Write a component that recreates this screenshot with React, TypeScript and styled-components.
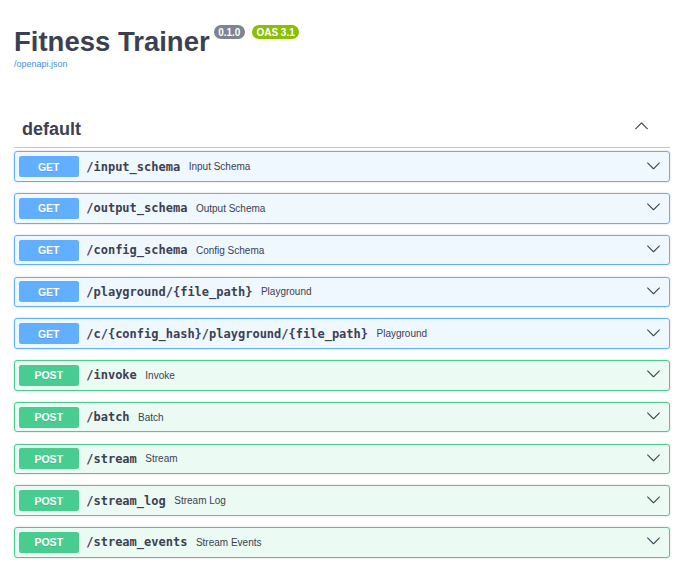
import React from "react";
import styled, { createGlobalStyle } from "styled-components";

const GlobalStyle = createGlobalStyle`
  html, body { margin: 0; padding: 0; background: #ffffff; }
  body { font-family: "Liberation Sans", Arial, sans-serif; color: #3b4151; }
  * { box-sizing: border-box; }
`;

const Wrapper = styled.div`
  padding: 0 10px 0 14px;
`;

const Info = styled.div`
  padding-top: 26px;
`;

const Title = styled.h2`
  margin: 0;
  display: flex;
  align-items: flex-start;
  font-family: "Liberation Sans", Arial, sans-serif;
  font-size: 27.5px;
  font-weight: 700;
  color: #3b4151;
  line-height: 31px;
`;

const Badge = styled.small<{ $green?: boolean }>`
  display: inline-block;
  margin: -1px 0 0 ${(p) => (p.$green ? "7px" : "4px")};
  padding: 1.5px 4.5px;
  border-radius: 57px;
  background: ${(p) => (p.$green ? "#89bf04" : "#7d8492")};
  color: #ffffff;
  font-family: "Liberation Sans", Arial, sans-serif;
  font-size: 10px;
  font-weight: 700;
  line-height: 11px;
`;

const Link = styled.a`
  display: block;
  margin-top: 2px;
  font-family: "Liberation Sans", Arial, sans-serif;
  font-size: 9px;
  line-height: 10px;
  color: #4990e2;
  text-decoration: none;
`;

const Section = styled.div`
  margin-top: 42px;
`;

const TagHeader = styled.div`
  display: flex;
  align-items: flex-start;
  padding: 7.5px 15px 7.5px 8px;
  border-bottom: 1px solid rgba(59, 65, 81, 0.3);
  margin-bottom: 3.75px;
`;

const TagName = styled.h3`
  margin: 0;
  flex: 1 1 auto;
  font-family: "Liberation Sans", Arial, sans-serif;
  font-size: 18px;
  font-weight: 700;
  line-height: 20.7px;
  color: #3b4151;
`;

const TagArrow = styled.span`
  display: flex;
  margin: -1px 6px 0 0;
  color: #3b4151;
`;

const OpBlock = styled.div<{ $method: "GET" | "POST" }>`
  display: flex;
  align-items: center;
  padding: 3.75px;
  margin: 0 0 11.25px;
  border-radius: 3px;
  border: 1px solid ${(p) => (p.$method === "GET" ? "#61affe" : "#49cc90")};
  background: ${(p) =>
    p.$method === "GET" ? "rgba(97, 175, 254, 0.1)" : "rgba(73, 204, 144, 0.1)"};
  box-shadow: 0 0 2.25px rgba(0, 0, 0, 0.19);
`;

const Method = styled.span<{ $method: "GET" | "POST" }>`
  min-width: 60px;
  padding: 4.5px 0;
  border-radius: 2.25px;
  background: ${(p) => (p.$method === "GET" ? "#61affe" : "#49cc90")};
  color: #ffffff;
  font-family: "Liberation Sans", Arial, sans-serif;
  font-size: 10.5px;
  font-weight: 700;
  line-height: 12px;
  text-align: center;
  text-shadow: 0 1px 0 rgba(0, 0, 0, 0.1);
`;

const Path = styled.span`
  padding: 0 8.5px 0 7.5px;
  font-family: "DejaVu Sans Mono", "Liberation Mono", monospace;
  font-size: 12px;
  font-weight: 700;
  color: #3b4151;
`;

const Desc = styled.span`
  flex: 1 1 auto;
  font-family: "Liberation Sans", Arial, sans-serif;
  font-size: 10px;
  color: #3b4151;
`;

const RowArrow = styled.span`
  display: flex;
  margin: 0 4.5px 3px 0;
  color: #3b4151;
`;

const ArrowDown = () => (
  <svg width="15" height="15" viewBox="0 0 20 20" fill="currentColor">
    <path d="M17.418 6.109c.272-.268.709-.268.979 0s.271.701 0 .969l-7.908 7.83c-.27.268-.707.268-.979 0l-7.908-7.83c-.27-.268-.27-.701 0-.969.271-.268.709-.268.979 0L10 13.25l7.418-7.141z" />
  </svg>
);

const ArrowUp = () => (
  <svg width="15" height="15" viewBox="0 0 20 20" fill="currentColor">
    <path d="M17.418 14.908c.272.268.709.268.979 0s.271-.701 0-.969l-7.908-7.83c-.27-.268-.707-.268-.979 0l-7.908 7.830c-.27.268-.27.701 0 .969.271.268.709.268.979 0L10 7.77l7.418 7.138z" />
  </svg>
);

type Op = { method: "GET" | "POST"; path: string; desc: string };

const ops: Op[] = [
  { method: "GET", path: "/input_schema", desc: "Input Schema" },
  { method: "GET", path: "/output_schema", desc: "Output Schema" },
  { method: "GET", path: "/config_schema", desc: "Config Schema" },
  { method: "GET", path: "/playground/{file_path}", desc: "Playground" },
  { method: "GET", path: "/c/{config_hash}/playground/{file_path}", desc: "Playground" },
  { method: "POST", path: "/invoke", desc: "Invoke" },
  { method: "POST", path: "/batch", desc: "Batch" },
  { method: "POST", path: "/stream", desc: "Stream" },
  { method: "POST", path: "/stream_log", desc: "Stream Log" },
  { method: "POST", path: "/stream_events", desc: "Stream Events" },
];

export default function App() {
  return (
    <>
      <GlobalStyle />
      <Wrapper>
        <Info>
          <Title>
            Fitness Trainer
            <Badge>0.1.0</Badge>
            <Badge $green>OAS 3.1</Badge>
          </Title>
          <Link href="#">/openapi.json</Link>
        </Info>
        <Section>
          <TagHeader>
            <TagName>default</TagName>
            <TagArrow>
              <ArrowUp />
            </TagArrow>
          </TagHeader>
          {ops.map((op) => (
            <OpBlock key={op.path} $method={op.method}>
              <Method $method={op.method}>{op.method}</Method>
              <Path>{op.path}</Path>
              <Desc>{op.desc}</Desc>
              <RowArrow>
                <ArrowDown />
              </RowArrow>
            </OpBlock>
          ))}
        </Section>
      </Wrapper>
    </>
  );
}
